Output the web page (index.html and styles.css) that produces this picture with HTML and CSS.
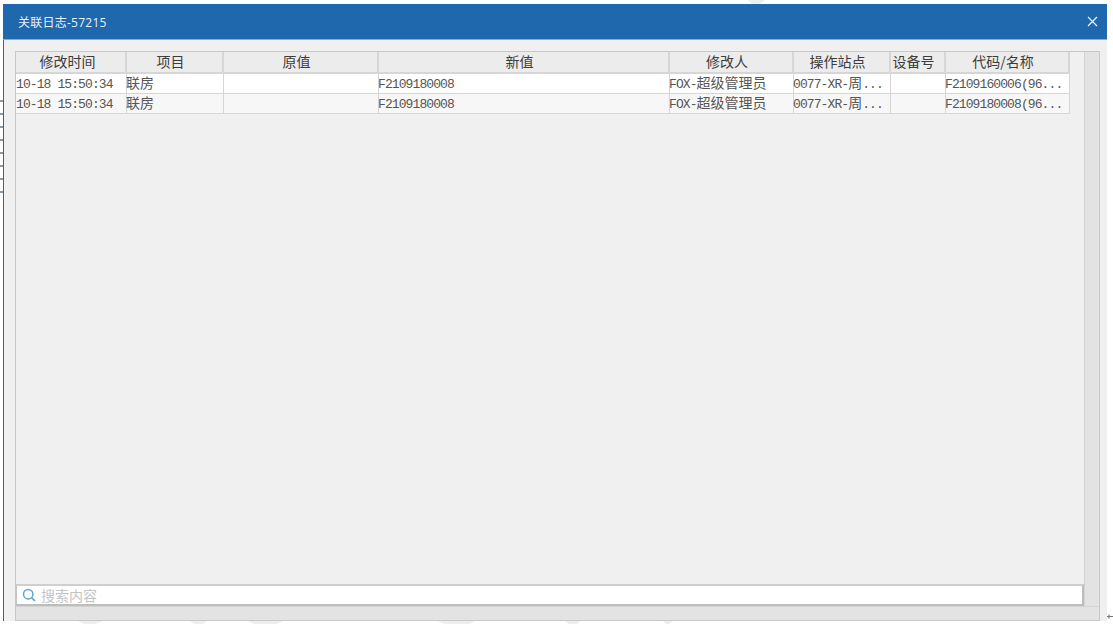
FILE: index.html
```html
<!DOCTYPE html>
<html lang="zh-CN">
<head>
<meta charset="utf-8">
<title>关联日志-57215</title>
<link rel="stylesheet" href="styles.css">
</head>
<body>
<svg class="backdrop" width="1113" height="624" viewBox="0 0 1113 624">
  <path d="M748 0H765L760 4H752Z"/>
  <path d="M78 621H103L95 624H84Z"/>
  <path d="M190 621H207L203 624H194Z"/>
  <path d="M248 621H283L277 624H254Z"/>
  <path d="M437 621H475L470 624H445Z"/>
  <path d="M565 621H580L577 624H569Z"/>
  <path d="M663 621H672L669 624H666Z"/>
</svg>
<div class="edge"></div>
<div class="dialog">
  <header class="titlebar">
    <span class="title">关联日志-57215</span>
    <svg class="close" width="11" height="11" viewBox="0 0 11 11"><path d="M1 1 10 10M10 1 1 10" stroke="#fff" stroke-width="1.1" fill="none"/></svg>
  </header>
  <div class="content">
    <div class="panel">
      <div class="main">
        <div class="tablearea">
          <div class="table">
            <div class="row head">
              <div>修改时间</div><div>项目</div><div>原值</div><div>新值</div><div>修改人</div><div>操作站点</div><div>设备号</div><div>代码/名称</div>
            </div>
            <div class="row">
              <div><span class="m">10-18 15:50:34</span></div><div>联房</div><div></div><div><span class="m">F2109180008</span></div><div><span class="m">FOX-</span>超级管理员</div><div><span class="m">0077-XR-</span>周<span class="m">...</span></div><div></div><div><span class="m">F2109160006(96...</span></div>
            </div>
            <div class="row alt">
              <div><span class="m">10-18 15:50:34</span></div><div>联房</div><div></div><div><span class="m">F2109180008</span></div><div><span class="m">FOX-</span>超级管理员</div><div><span class="m">0077-XR-</span>周<span class="m">...</span></div><div></div><div><span class="m">F2109180008(96...</span></div>
            </div>
          </div>
          <div class="search">
            <svg class="glass" width="14" height="14" viewBox="0 0 14 14"><circle cx="6.2" cy="6.2" r="4.7" stroke="#5aa5d6" stroke-width="1.5" fill="none"/><path d="M9.6 9.6 13 13" stroke="#5aa5d6" stroke-width="1.6" fill="none"/></svg>
            <span class="placeholder">搜索内容</span>
          </div>
        </div>
        <div class="vscroll"></div>
      </div>
      <div class="hscroll"></div>
    </div>
  </div>
</div>
<svg class="resize" width="6" height="7" viewBox="0 0 6 7"><path d="M0 3.5H6M2 1.5V5.5" stroke="#777" stroke-width="1.2" fill="none"/></svg>
</body>
</html>
```
FILE: styles.css
```css
* { box-sizing: border-box; }
html, body { margin: 0; height: 100%; }
body {
  background: #fff;
  padding: 4px 6px 3px 3px;
  font-family: "Noto Sans CJK SC", sans-serif;
  overflow: hidden;
  position: relative;
}
.backdrop { position: absolute; left: 0; top: 0; fill: #eeeeee; }
.edge {
  position: absolute;
  left: 0;
  top: 100px;
  width: 3px;
  height: 96px;
  background: repeating-linear-gradient(180deg, #8a99a6 0 2px, #ffffff 2px 13px);
}
.dialog {
  position: relative;
  height: 100%;
  display: flex;
  flex-direction: column;
  background: #f0f0f0;
}
.titlebar {
  height: 36px;
  flex: none;
  background: #1f68ad;
  border-bottom: 1px solid #8fa9c2;
  display: flex;
  align-items: center;
  justify-content: space-between;
  padding: 0 9px 0 15px;
  color: #fff;
}
.title {
  font-size: 12px;
  letter-spacing: 0.25px;
  color: #e8f0f8;
  font-family: "Open Sans", "Noto Sans CJK SC", sans-serif;
}
.content {
  flex: 1;
  min-height: 0;
  display: flex;
  padding: 11px 7px 0 11px;
  border-left: 1px solid #2a6aa5;
}
.panel {
  flex: 1;
  display: flex;
  flex-direction: column;
  border: 1px solid #c8c8c8;
}
.main { flex: 1; min-height: 0; display: flex; }
.tablearea { flex: 1; min-width: 0; display: flex; flex-direction: column; }
.table { flex: 1; min-height: 0; }
.vscroll { width: 15px; flex: none; background: #e3e3e3; border-left: 1px solid #d4d4d4; }
.hscroll { height: 14px; flex: none; background: #e3e3e3; border-top: 1px solid #d4d4d4; }
.row {
  display: grid;
  grid-template-columns: 111px 97px 155px 291px 124px 97px 55px 124px;
  width: 1054px;
  height: 20px;
  font-size: 14px;
  line-height: 17px;
  color: #555;
  background: #fff;
  border-bottom: 1px solid #d6d6d6;
  white-space: nowrap;
}
.row > div { border-right: 1px solid #d6d6d6; }
.row > div + div { text-indent: -1px; }
.row.alt { background: #f7f7f7; }
.row.head {
  height: 22px;
  background: #ececec;
  color: #3c3c3c;
  text-align: center;
  line-height: 18px;
  border-bottom: 2px solid #d6d6d6;
}
.row.head > div { border-right-width: 2px; padding-right: 6px; text-indent: 0; }
.row.head > div + div { padding-right: 8px; }
.m {
  font-family: "Liberation Mono", monospace;
  font-size: 13px;
  letter-spacing: -0.9px;
}
.search {
  flex: none;
  height: 22px;
  background: #fff;
  border: 1px solid #c4c4c4;
  border-top: 2px solid #cfcfcf;
  border-bottom: 2px solid #bdbdbd;
  border-right: 2px solid #bdbdbd;
  display: flex;
  align-items: center;
  gap: 5px;
  padding-left: 5px;
}
.placeholder { font-size: 14px; color: #c4c4c4; line-height: 17px; }
.resize { position: absolute; right: 0; bottom: 4px; }
```
